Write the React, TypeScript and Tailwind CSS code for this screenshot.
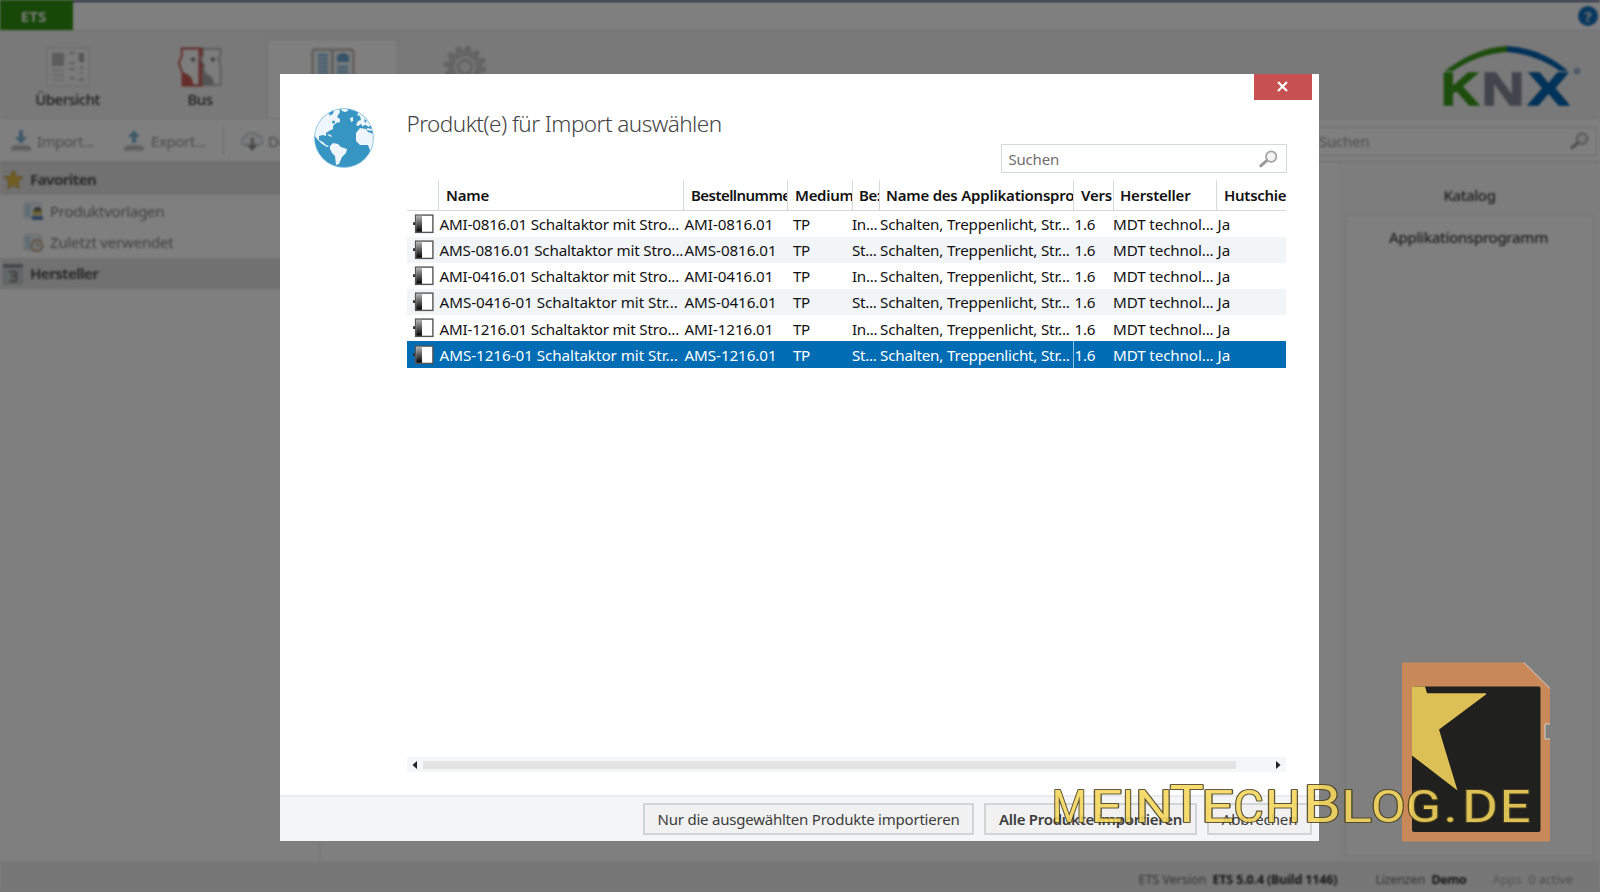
import React from "react";

const COLS = "grid grid-cols-[32px_245px_104px_65px_27px_194px_40px_103px_69px]";

const rows = [
  ["AMI-0816.01 Schaltaktor mit Stro...", "AMI-0816.01", "In..."],
  ["AMS-0816.01 Schaltaktor mit Stro...", "AMS-0816.01", "St..."],
  ["AMI-0416.01 Schaltaktor mit Stro...", "AMI-0416.01", "In..."],
  ["AMS-0416-01 Schaltaktor mit Str...", "AMS-0416.01", "St..."],
  ["AMI-1216.01 Schaltaktor mit Stro...", "AMI-1216.01", "In..."],
  ["AMS-1216-01 Schaltaktor mit Str...", "AMS-1216.01", "St..."],
];

const headers: [string, string][] = [
  ["", "pl-[7px]"],
  ["Name", "pl-[7px] tracking-[-0.220px]"],
  ["Bestellnumme", "pl-[7px] tracking-[-0.550px]"],
  ["Medium", "pl-[7px] tracking-[-0.300px]"],
  ["Be:", "pl-[6px] tracking-[-0.500px]"],
  ["Name des Applikationspro", "pl-[6px] tracking-[-0.220px]"],
  ["Vers", "pl-[7px] tracking-[-0.220px]"],
  ["Hersteller", "pl-[6px] tracking-[-0.220px]"],
  ["Hutschie", "pl-[7px] tracking-[-0.280px]"],
];

function DeviceIcon({ id }: { id: number }) {
  return (
    <svg width="22" height="20" viewBox="0 0 22 20" className="ml-[5px]">
      <defs>
        <linearGradient id={`dev${id}`} x1="0" y1="0" x2="0" y2="1">
          <stop offset="0" stopColor="#b5b5b5" />
          <stop offset="1" stopColor="#000" />
        </linearGradient>
      </defs>
      <path d="M1 8.2h3v2.8H1z" fill="#333" />
      <rect x="3.6" y="1.1" width="17.3" height="17.3" fill="#fff" stroke="#555" strokeWidth="1.4" />
      <rect x="4.2" y="1.8" width="5.8" height="16" fill={`url(#dev${id})`} />
    </svg>
  );
}

function Magnifier() {
  return (
    <svg width="20" height="18" viewBox="0 0 20 18">
      <path d="M1.8 15.8 8 10.4" stroke="#999" strokeWidth="3" strokeLinecap="round" />
      <circle cx="12.2" cy="6.6" r="5.2" fill="#f4f4f4" stroke="#a3a3a3" strokeWidth="1.7" />
    </svg>
  );
}

function Globe() {
  return (
    <svg width="60" height="60" viewBox="0 0 60 60">
      <defs>
        <clipPath id="disc"><circle cx="30" cy="30" r="29.5" /></clipPath>
      </defs>
      <circle cx="30" cy="30" r="29.6" fill="#3795c4" />
      <g clipPath="url(#disc)" fill="#eef6fb">
        <path d="M0 27 3 15 13 5l3 1-1 2 4-2 1-4 5-2 1 4-3 5 3 2 0 3-4 1-3 3 0 3-4 2-3 2 0 3-3-1-4 1 0 4 4 2 3 3 3 1-2 1-5-3-4-4z" />
        <path d="m13 26 4 1 1 2-3-1zM27 1l6-1 1 3-3 1-3-1zM36 10l3-1 0 4-2 1z" />
        <path d="m16 38 3-3 5 1 3 3 6 2-1 4-4 4-3 7-3 1-1-9-3-3-2-4z" />
        <path d="m42 25 4-5 6 1 2 3 6 2v20l-3-1-3-8-8 0-4-4z" />
        <path d="m42 17 2-4 3-1-1-4-3-1 2-3 4-1 8 8 2 7-3 0-2 1-3-2-2 2-2-3-3 2z" />
        <path d="m53 20 5 1v2l-5-1z" />
      </g>
      <g fill="#3795c4">
        <circle cx="19.500" cy="14" r="1.500" />
        <path d="m50 11 3 2-2 2zM50 17l4 1-1 2-4-1z" />
      </g>
      <circle cx="30" cy="30" r="29.4" fill="none" stroke="#8cc4e0" strokeWidth=".7" />
    </svg>
  );
}

function OverviewIcon() {
  return (
    <svg width="44" height="40" viewBox="0 0 44 40">
      <rect x="1" y="1" width="42" height="38" fill="#f6f6f6" stroke="#d4d4d4" />
      <path d="M6 6h12v13H6z" fill="#b8b8b8" />
      <path d="M6 22h12v3H6zM6 27h12v3H6zM6 32h12v2H6z" fill="#dcdcdc" />
      <path d="M23.500 6h5M23.500 16h5M23.500 22h5M23.500 31h5" stroke="#bbb" strokeWidth="2" />
      <path d="M33 6h5v9h-5z" fill="#aaa" />
      <path d="M34 19h3v3h-3zM34 25h3v2h-3zM33 31h5v3h-5z" fill="#c8c8c8" />
    </svg>
  );
}

function BusIcon() {
  return (
    <svg width="44" height="40" viewBox="0 0 44 40">
      <path d="M3.500 1.500H24V38.500H4.500V26L2 19.500 1 16 4 8z" fill="#fafafa" stroke="#c05048" strokeWidth="1.800" />
      <path d="M4 25q11 3 11.500 13H4z" fill="#cc5c54" />
      <path d="M20.500 1H24v6l-2 4 2 5v22h-3.500z" fill="#c9605a" />
      <path d="M25 2h17.500v5l-2 5 2 6v20H26V18l-3-5 2-5z" fill="#fafafa" stroke="#aaa" strokeWidth="1.500" />
      <path d="M24 19q2 7 7 9 5 3 5 10H24z" fill="#a8a8a8" />
      <circle cx="15" cy="12.500" r="2.200" fill="#888" />
      <circle cx="35" cy="12.500" r="2.200" fill="#888" />
    </svg>
  );
}

function BookIcon() {
  return (
    <svg width="44" height="40" viewBox="0 0 44 40">
      <rect x="1.500" y="1.500" width="20" height="36" rx="3" fill="#f4f7f9" stroke="#b8b0a8" strokeWidth="2" />
      <rect x="21.500" y="1.500" width="21" height="36" rx="3" fill="#f4f7f9" stroke="#b8b0a8" strokeWidth="2" />
      <path d="M7 7h10M7 11h10M7 15h10M7 19h10M7 23h10M7 27h10M26 19h11M26 23h11M26 27h11" stroke="#8fc0e2" strokeWidth="2.800" />
      <path d="M26 14V8q6-6 12 0v6z" fill="#6aa6d2" />
    </svg>
  );
}

function GearIcon() {
  return (
    <svg width="44" height="44" viewBox="0 0 44 44" fill="none">
      <circle cx="22" cy="22" r="19" stroke="#c2c2c2" strokeWidth="4" strokeDasharray="5 4.948" />
      <circle cx="22" cy="22" r="14" stroke="#cacaca" strokeWidth="7" />
      <circle cx="22" cy="22" r="7" stroke="#b5b5b5" strokeWidth="2" fill="#e8e8e8" />
    </svg>
  );
}

function TrayIcon({ up }: { up?: boolean }) {
  return (
    <svg width="22" height="22" viewBox="0 0 22 22">
      <path d="M4 15 1 18v3h20v-3l-3-3z" fill="#cacaca" />
      <path d="M1 18h20" stroke="#adadad" />
      <path d={up ? "M9 13V7H5l6-7 6 7h-4v6z" : "M9 0h4v7h4l-6 7-6-7h4z"} fill="#7db3d4" />
    </svg>
  );
}

function CloudIcon() {
  return (
    <svg width="22" height="22" viewBox="0 0 22 22">
      <path d="M5 15a4 4 0 0 1-1-8 7 6 0 0 1 13-1 4.500 4.500 0 0 1 1 9z" fill="#f4f4f4" stroke="#b5c2c6" strokeWidth="1.300" />
      <path d="M10 8h2.500v7h4l-5.250 6L6 15h4z" fill="#8e8e8e" />
    </svg>
  );
}

function PageIcon({ clock }: { clock?: boolean }) {
  return (
    <svg width="21" height="20" viewBox="0 0 21 20">
      <path d="M1 2 8 1l2 1h8v16H10l-9-1z" fill="#e6eef2" stroke="#c8d4da" />
      <path d="M3 5h4M3 8h4M3 11h4M3 14h4" stroke="#8cc2e2" strokeWidth="1.600" />
      {clock ? (
        <g>
          <circle cx="14" cy="12.500" r="5.500" fill="#eee" stroke="#c0a07c" strokeWidth="1.800" />
          <path d="M14 9.500v3h2.500" stroke="#777" fill="none" />
        </g>
      ) : (
        <g>
          <path d="M10 10q5-8 9 0z" fill="#666" />
          <path d="M10 10h9v4h-9z" fill="#dcc060" />
          <path d="M9 15h11v4H9z" fill="#5c84b8" />
        </g>
      )}
    </svg>
  );
}

function KnxLogo() {
  return (
    <svg width="140" height="66" viewBox="1442 44 140 66" className="shrink-0 overflow-visible">
      <path d="M1445 71Q1474 48 1507 46V52Q1478 54 1453 71z" fill="#3a9a1a" />
      <path d="M1507 46Q1541 48 1568 71H1560Q1536 54 1507 52z" fill="#0062b0" />
      <g fontFamily="Liberation Sans, sans-serif" fontWeight="700" fontSize="46" strokeWidth="1.5">
        <text x="1441" y="104.500" textLength="38" lengthAdjust="spacingAndGlyphs" fill="#3a9a1a" stroke="#3a9a1a">K</text>
        <text x="1481.500" y="104.500" textLength="43" lengthAdjust="spacingAndGlyphs" fill="#85899a" stroke="#85899a">N</text>
        <text x="1528" y="104.500" textLength="41" lengthAdjust="spacingAndGlyphs" fill="#0062b0" stroke="#0062b0">X</text>
      </g>
      <circle cx="1577" cy="71" r="2.200" fill="none" stroke="#4a7fb5" strokeWidth="1.300" />
    </svg>
  );
}

function Background() {
  return (
    <div className="flex h-[892px] w-[1600px] flex-col bg-white text-[#3c3c3c] blur-[1.2px]">
      <div className="h-[2px] bg-[#3d5278]" />
      <div className="flex h-[29px] items-stretch justify-between border-b border-[#dedede]">
        <div className="-mt-[2px] flex w-[73px] items-center justify-center bg-[#2f9010] pr-[6px] pt-[2px] text-[15px] font-bold text-[#f2f2f2]">ETS</div>
        <div className="mr-[2px] mt-[4px] flex h-[20px] w-[20px] items-center justify-center rounded-full bg-[#1470be] text-[15px] font-bold text-[#ddd]">?</div>
      </div>
      <div className="flex h-[88px] justify-between border-b border-[#e2e2e2] bg-[#f2f2f2]">
        <div className="flex text-[15px] font-medium">
          <div className="flex w-[135px] flex-col items-center pt-[16px]"><OverviewIcon /><span className="mt-[2px] leading-[20px] tracking-[-0.500px]">Übersicht</span></div>
          <div className="flex w-[130px] flex-col items-center pt-[16px]"><BusIcon /><span className="mt-[2px] leading-[20px] tracking-[-0.500px]">Bus</span></div>
          <div className="ml-[2px] mt-[8px] flex w-[131px] flex-col items-center border border-b-0 border-[#e0e0e0] bg-white pt-[8px]"><BookIcon /></div>
          <div className="flex w-[134px] flex-col items-center pt-[14px]"><GearIcon /></div>
        </div>
        <div className="pr-[18px] pt-[13px]"><KnxLogo /></div>
      </div>
      <div className="flex h-[43px] items-center justify-between border-b border-[#dcdcdc] pt-[2px] text-[15px] text-[#999]">
        <div className="flex items-center pl-[10px]">
          <TrayIcon /><span className="ml-[5px] w-[86px] tracking-[-0.450px]">Import...</span>
          <TrayIcon up /><span className="ml-[6px] w-[72px] tracking-[-0.400px]">Export...</span>
          <span className="h-[28px] w-[18px] border-l border-[#ccc]" />
          <CloudIcon /><span className="ml-[5px]">Download</span>
        </div>
        <div className="mr-[3px] flex h-[29px] w-[300px] items-center justify-between border border-[#dcdcdc] pl-[21px] pr-[6px]">
          <span className="tracking-[-0.200px]">Suchen</span><Magnifier />
        </div>
      </div>
      <div className="flex h-[699px]">
        <div className="w-[320px] shrink-0 border-r border-[#e2e2e2] text-[15px]">
          <div className="flex h-[33px] items-center bg-[#e2e2e2] pl-[3px] pt-px font-bold text-[#555]">
            <svg width="21" height="21" viewBox="0 0 21 21"><path d="m10.500 1 2.800 6.300 6.700.8-5 4.600 1.400 7-5.900-3.500-5.900 3.500 1.400-7-5-4.600 6.700-.8z" fill="#e5bd45" stroke="#b99a50" /></svg>
            <span className="ml-[6px] tracking-[-0.600px]">Favoriten</span>
          </div>
          <div className="flex h-[32px] items-center pl-[23px] text-[#808080]"><PageIcon /><span className="ml-[6px] tracking-[-0.250px]">Produktvorlagen</span></div>
          <div className="flex h-[31px] items-center pl-[23px] text-[#808080]"><PageIcon clock /><span className="ml-[6px] tracking-[-0.200px]">Zuletzt verwendet</span></div>
          <div className="flex h-[31px] items-center bg-[#e2e2e2] pl-[2px] font-bold text-[#555]">
            <svg width="22" height="22" viewBox="0 0 22 22"><path d="M1 1h20v4H1z" fill="#8a9296" /><path d="M2 7h18v14H2z" fill="#ccd2d2" stroke="#b0b8b8" /><path d="M7 9h8M9 13h6M7 18h8M14.500 9v9" stroke="#888" strokeWidth="2.400" /></svg>
            <span className="ml-[6px] tracking-[-0.650px]">Hersteller</span>
          </div>
        </div>
        <div className="flex-1" />
        <div className="w-[262px] bg-[#fafafa] pl-[7px] text-center text-[15px] font-medium">
          <div className="h-[53px] pr-[6px] pt-[22px] leading-[22px] tracking-[-0.400px]">Katalog</div>
          <div className="h-[641px] w-[249px] border border-[#e8e8e8] bg-white pr-[2px] pt-[10px] leading-[22px] tracking-[-0.350px]">Applikationsprogramm</div>
        </div>
      </div>
      <div className="flex h-[31px] items-center justify-end bg-[#efefef] pr-[27px] pt-[7px] text-[12.500px] text-[#666]">
        <span className="w-[74px]">ETS Version</span><b className="w-[163px] tracking-[-0.150px] text-[#2c2c2c]">ETS 5.0.4 (Build 1146)</b>
        <span className="w-[56px] tracking-[-0.200px]">Lizenzen</span><b className="w-[61px] tracking-[-0.400px] text-[#2c2c2c]">Demo</b>
        <span className="w-[36px] text-[#aaa]">Apps</span><span className="text-[#999]">0 active</span>
      </div>
    </div>
  );
}

function ProductTable() {
  return (
    <div className="w-[879px] overflow-hidden text-[15.200px] text-[#111]">
      <div className={`${COLS} h-[31px] border-b border-[#d5d9dc]`}>
        {headers.map(([label, fit], i) => (
          <div key={i} className={`overflow-hidden whitespace-nowrap pt-[4px] text-[15px] font-semibold leading-[22px] text-[#111] ${fit} ${i < 8 ? "border-r border-[#d5dadd]" : ""}`}>{label}</div>
        ))}
      </div>
      {rows.map((r, i) => {
        const tone = i === 5 ? "bg-[#006cb4] text-white" : i % 2 ? "bg-[#f1f5f8]" : "";
        return (
          <div key={i} className={`${COLS} h-[26.100px] items-center whitespace-nowrap ${tone}`}>
            <DeviceIcon id={i} />
            <span className={`pl-[0.500px] pt-px ${r[0].startsWith("AMI") ? "tracking-[-0.210px]" : i === 1 ? "tracking-[-0.180px]" : "tracking-[-0.040px]"}`}>{r[0]}</span>
            <span className="pl-[0.500px] pt-px tracking-[-0.080px]">{r[1]}</span>
            <span className="pl-[5px] pt-px tracking-[-0.500px]">TP</span>
            <span className="-ml-px pt-px tracking-[-0.300px]">{r[2]}</span>
            <span className={`flex h-full items-center pt-px tracking-[-0.200px] ${i === 5 ? "border-r border-[#8fc0e2]" : ""}`}>Schalten, Treppenlicht, Str...</span>
            <span className="pl-[0.500px] pt-px tracking-[-0.200px]">1.6</span>
            <span className="-ml-px pt-px tracking-[-0.120px]">MDT technol...</span>
            <span className="pl-[0.500px] pt-px">Ja</span>
          </div>
        );
      })}
    </div>
  );
}

function Dialog() {
  const button = "flex h-[32px] items-center justify-center whitespace-nowrap border-2 border-[#d2d5d6] bg-[#f1f1f1] text-[15px] text-[#3c3c3c]";
  return (
    <div className="absolute left-[279.500px] top-[73.500px] flex h-[767.500px] w-[1039px] flex-col bg-white">
      <div className="flex h-[70.500px] justify-between pl-[34.500px] pr-[6.500px]">
        <div className="flex pt-[34.500px]">
          <Globe />
          <h1 className="ml-[32.500px] text-[22.500px] font-light leading-[32px] tracking-[-0.540px] text-[#444]">Produkt(e) für Import auswählen</h1>
        </div>
        <div className="mt-[0.500px] flex h-[26px] w-[58px] items-center justify-center bg-[#c75050]">
          <svg width="12" height="12" viewBox="0 0 12 12"><path d="m1 1 9 9m0-9-9 9" stroke="#fff" strokeWidth="2.200" /></svg>
        </div>
      </div>
      <div className="mr-[32px] flex h-[29px] w-[286px] items-center justify-between self-end border border-[#d3d8da] pl-[7px] pr-[7px] text-[15px] text-[#6e6e6e]">
        <span className="pt-[2px] tracking-[-0.200px]">Suchen</span><Magnifier />
      </div>
      <div className="ml-[127.500px] mt-[7px] h-[577px]"><ProductTable /></div>
      <div className="ml-[127.500px] flex h-[15px] w-[879px] items-center justify-between bg-[#f4f6f7] pl-[5px] pr-[5px]">
        <svg width="6" height="8" viewBox="0 0 6 8"><path d="M5 0v8L.5 4z" fill="#222" /></svg>
        <div className="ml-[4.500px] mr-auto h-[8px] w-[813px] bg-[#e3e3e3]" />
        <svg width="6" height="8" viewBox="0 0 6 8"><path d="M1 0v8l4.500-4z" fill="#222" /></svg>
      </div>
      <div className="mt-auto flex h-[46px] items-center justify-end gap-[10px] border-t-2 border-[#e9ebec] bg-[#f3f5f7] pr-[6.500px]">
        <div className={`${button} w-[331px] pt-px tracking-[-0.220px]`}>Nur die ausgewählten Produkte importieren</div>
        <div className={`${button} w-[213px] pt-px font-semibold tracking-[-0.280px]`}>Alle Produkte importieren</div>
        <div className={`${button} w-[105px] pt-px tracking-[-0.100px]`}>Abbrechen</div>
      </div>
    </div>
  );
}

const wordmark: [string, number, number, boolean][] = [
  ["M", 1052, 34.5, false], ["E", 1090.5, 32, false], ["I", 1122, 12, false], ["N", 1135, 38, false],
  ["T", 1169.5, 34.5, true], ["E", 1201, 33, false], ["C", 1233.5, 30, false], ["H", 1265, 36, false],
  ["B", 1303, 38, true], ["L", 1341, 31, false], ["O", 1371, 34.5, false], ["G", 1406, 35, false],
  [".", 1443.5, 14, false], ["D", 1462, 36, false], ["E", 1499.5, 31, false],
];

function Watermark() {
  return (
    <svg className="absolute left-[1040px] top-[650px]" width="530" height="200" viewBox="1040 650 530 200">
      <path d="M1402 662.500H1524L1550 688.500V724H1545V739H1550V841.500H1402z" fill="#c88858" />
      <path d="M1524 662.500 1550 688.500M1550 724H1545V739H1550" fill="none" stroke="#d8d2cc" strokeWidth="1" />
      <rect x="1412" y="686.500" width="128.500" height="145.500" rx="2" fill="#20201f" />
      <path d="M1412 686.500H1425L1427 693.300H1486V694.500L1439 729.500 1457.500 790.500 1412 755.500z" fill="#dcc055" />
      <g opacity=".88" fontFamily="Roboto, sans-serif" fontWeight="400" fill="#f6d75c" stroke="#4a4220" strokeWidth="2.200" strokeLinejoin="round" paintOrder="stroke">
        {wordmark.map(([ch, x, w, big], i) => (
          <text key={i} x={x} y="821.500" fontSize={big ? 52 : 43.5} textLength={w} lengthAdjust="spacingAndGlyphs">{ch}</text>
        ))}
      </g>
    </svg>
  );
}

export default function App() {
  return (
    <div className="relative h-[892px] w-[1600px] overflow-hidden bg-white font-['Noto_Sans',sans-serif]">
      <Background />
      <div className="absolute inset-0 bg-black/50" />
      <Dialog />
      <Watermark />
    </div>
  );
}
